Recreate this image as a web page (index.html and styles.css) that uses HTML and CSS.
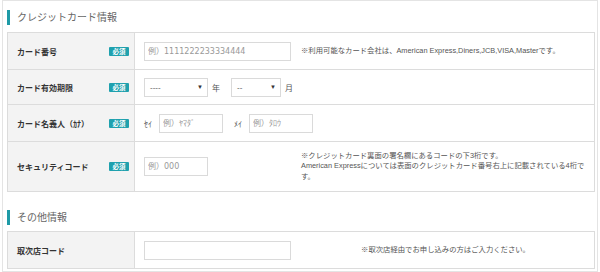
FILE: index.html
```html
<!DOCTYPE html>
<html lang="ja">
<head>
<meta charset="utf-8">
<link rel="stylesheet" href="styles.css">
</head>
<body>
<div class="frame">
  <h2 class="sec-title">クレジットカード情報</h2>
  <div class="table">
    <div class="row h37">
      <div class="label"><span>カード番号</span><span class="badge">必須</span></div>
      <div class="value">
        <div class="field"><input class="inp w147" type="text" placeholder="例）1111222233334444"></div>
        <div class="note">※利用可能なカード会社は、American Express,Diners,JCB,VISA,Masterです。</div>
      </div>
    </div>
    <div class="row h35">
      <div class="label"><span>カード有効期限</span><span class="badge">必須</span></div>
      <div class="value">
        <div class="field">
          <div class="sel w64"><span>----</span><span class="arr">▼</span></div>
          <span class="unit">年</span>
          <div class="sel w50"><span>--</span><span class="arr">▼</span></div>
          <span class="unit">月</span>
        </div>
      </div>
    </div>
    <div class="row h37">
      <div class="label"><span>カード名義人（ｶﾅ）</span><span class="badge">必須</span></div>
      <div class="value">
        <div class="field">
          <span class="kana">ｾｲ</span>
          <input class="inp w64" type="text" placeholder="例）ﾔﾏﾀﾞ">
          <span class="kana kana2">ﾒｲ</span>
          <input class="inp w64" type="text" placeholder="例）ﾀﾛｳ">
        </div>
      </div>
    </div>
    <div class="row h50">
      <div class="label"><span>セキュリティコード</span><span class="badge">必須</span></div>
      <div class="value">
        <div class="field"><input class="inp w64" type="text" placeholder="例）000"></div>
        <div class="note">※クレジットカード裏面の署名欄にあるコードの下3桁です。<br>American Expressについては表面のクレジットカード番号右上に記載されている4桁です。</div>
      </div>
    </div>
  </div>

  <h2 class="sec-title sec2">その他情報</h2>
  <div class="table">
    <div class="row h37">
      <div class="label"><span>取次店コード</span></div>
      <div class="value">
        <div class="field"><input class="inp w147" type="text"></div>
        <div class="note center">※取次店経由でお申し込みの方はご入力ください。</div>
      </div>
    </div>
  </div>
</div>
</body>
</html>
```

FILE: styles.css
```css
* { box-sizing: border-box; }
html, body { margin: 0; padding: 0; background: #fff; }
body {
  font-family: "Liberation Sans", "Noto Sans CJK JP", sans-serif;
  color: #333;
}
.frame {
  width: 596px;
  height: 272px;
  margin-left: 2px;
  border: 1px solid #e4e4e4;
  padding: 9px 2px 0 4px;
}
.sec-title {
  margin: 0 0 7px 0;
  height: 15px;
  border-left: 3px solid #1e9aa6;
  padding-left: 7px;
  font-size: 10px;
  line-height: 15px;
  font-weight: normal;
  color: #666;
}
.sec2 { margin-top: 18px; margin-bottom: 6px; }
.table {
  border: 1px solid #dcdcdc;
  border-bottom: none;
}
.row {
  display: flex;
  border-bottom: 1px solid #dcdcdc;
}
.h37 { height: 37px; }
.h35 { height: 35px; }
.h50 { height: 50px; }
.label {
  width: 127px;
  flex: none;
  background: #f3f3f3;
  border-right: 1px solid #dcdcdc;
  display: flex;
  align-items: center;
  justify-content: space-between;
  padding: 0 5px 0 9px;
  font-size: 8px;
  font-weight: bold;
  color: #333;
}
.badge {
  display: inline-block;
  width: 20px;
  height: 9px;
  background: #1fa1ae;
  color: #fff;
  font-size: 6.5px;
  line-height: 9px;
  text-align: center;
  border-radius: 1px;
}
.value {
  flex: 1;
  display: flex;
  align-items: center;
  padding-left: 9px;
}
.field {
  width: 157px;
  flex: none;
  display: flex;
  align-items: center;
}
.inp {
  height: 19px;
  border: 1px solid #dadada;
  padding: 0 3px;
  font-family: "DejaVu Sans", "Noto Sans CJK JP", sans-serif;
  font-size: 8px;
  color: #333;
  background: #fff;
  outline: none;
  margin: 0;
}
.inp::placeholder { color: #999; }
.w147 { width: 147px; }
.w64 { width: 64px; }
.sel {
  height: 19px;
  border: 1px solid #dadada;
  display: flex;
  align-items: center;
  justify-content: space-between;
  padding: 0 4px 0 5px;
  font-size: 8px;
  color: #555;
  flex: none;
}
.sel.w64 { width: 64px; }
.sel.w50 { width: 50px; }
.arr { font-size: 6px; color: #333; }
.unit {
  font-size: 8px;
  color: #555;
  margin: 0 11px 0 4px;
  font-family: "Noto Sans CJK JP", sans-serif;
}
.kana {
  font-size: 8px;
  color: #555;
  width: 15px;
  flex: none;
}
.kana2 { margin-left: 11px; }
.note {
  flex: 1;
  font-size: 7.35px;
  line-height: 10.5px;
  color: #555;
  padding-right: 6px;
}
.note.center { text-align: center; padding-right: 4px; }
```
